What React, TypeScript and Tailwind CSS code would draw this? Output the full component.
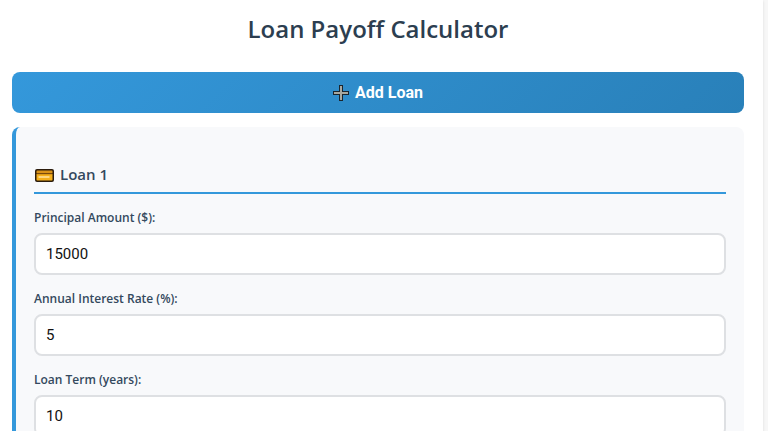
import { useState } from "react";

interface Loan {
  id: number;
  principal: string;
  rate: string;
  years: string;
}

interface FieldProps {
  id: string;
  label: string;
  value: string;
  onChange: (value: string) => void;
}

const PlusIcon = () => (
  <svg className="w-4 h-4 shrink-0" viewBox="0 0 16 16" aria-hidden="true">
    <path d="M6 0h4v6h6v4h-6v6H6v-6H0V6h6z" fill="#1b262e" />
    <path d="M7 1h2v6h6v2H9v6H7V9H1V7h6z" fill="#a8a8a0" />
  </svg>
);

const CardIcon = () => (
  <svg className="w-5 h-4 shrink-0" viewBox="0 0 20 16" aria-hidden="true">
    <rect x="1" y="2" width="19" height="13" rx="2" fill="#2b1c0c" />
    <path d="M2.5 4.2q0-.8.8-.8h14.4q.8 0 .8.8V6h-16z" fill="#d99218" />
    <path d="M2.5 7h16v5.8q0 .8-.8.8H3.3q-.8 0-.8-.8z" fill="#f5b01c" />
    <path d="M2.5 6h16v1.200h-16z" fill="#7a4a0c" />
    <path d="M4.5 9.200h11v1.600h-11z" fill="#ffe19a" />
  </svg>
);

const Field = ({ id, label, value, onChange }: FieldProps) => (
  <div>
    <label htmlFor={id} className="block mb-[7px] text-xs font-semibold text-[#34495e]">
      {label}
    </label>
    <input
      id={id}
      type="text"
      inputMode="decimal"
      value={value}
      onChange={(e) => onChange(e.target.value)}
      className="block w-full h-[42px] px-2.5 rounded-lg border-2 border-[#dee0e3] bg-white font-['Roboto',sans-serif] text-[15px] text-[#111111] outline-none focus:border-[#3498db]"
    />
  </div>
);

const App = () => {
  const [loans, setLoans] = useState<Loan[]>([{ id: 1, principal: "15000", rate: "5", years: "10" }]);

  const addLoan = () => {
    setLoans([...loans, { id: loans.length + 1, principal: "", rate: "", years: "" }]);
  };

  const updateLoan = (id: number, changes: Partial<Loan>) => {
    setLoans(loans.map((loan) => (loan.id === id ? { ...loan, ...changes } : loan)));
  };

  return (
    <div className="min-h-screen bg-[#f7f7f7] pr-[5px] font-['Open_Sans','Noto_Sans',sans-serif]">
      <main className="min-h-screen bg-white pl-3 pr-[19px] pt-[11px] pb-5 shadow-sm">
        <h1 className="mb-[25px] text-center text-2xl leading-9 font-semibold text-[#2c3e50]">Loan Payoff Calculator</h1>

        <button
          type="button"
          onClick={addLoan}
          className="flex items-center justify-center gap-1.5 w-full h-[41px] rounded-lg bg-linear-135 from-[#3498db] to-[#2980b9] font-['Roboto',sans-serif] text-base font-bold text-white"
        >
          <PlusIcon />
          Add Loan
        </button>

        {loans.map((loan) => (
          <section key={loan.id} className="mt-3.5 px-[18px] pt-9 pb-5 rounded-lg border-l-4 border-[#3498db] bg-[#f8f9fb]">
            <h2 className="flex items-center gap-1.5 h-[31px] pb-1.5 mb-4 border-b-2 border-[#3498db] text-[15px] font-semibold text-[#34495e]">
              <CardIcon />
              Loan {loan.id}
            </h2>
            <div className="space-y-4">
              <Field
                id={`principal-${loan.id}`}
                label="Principal Amount ($):"
                value={loan.principal}
                onChange={(principal) => updateLoan(loan.id, { principal })}
              />
              <Field
                id={`rate-${loan.id}`}
                label="Annual Interest Rate (%):"
                value={loan.rate}
                onChange={(rate) => updateLoan(loan.id, { rate })}
              />
              <Field
                id={`years-${loan.id}`}
                label="Loan Term (years):"
                value={loan.years}
                onChange={(years) => updateLoan(loan.id, { years })}
              />
            </div>
          </section>
        ))}
      </main>
    </div>
  );
};

export default App;
